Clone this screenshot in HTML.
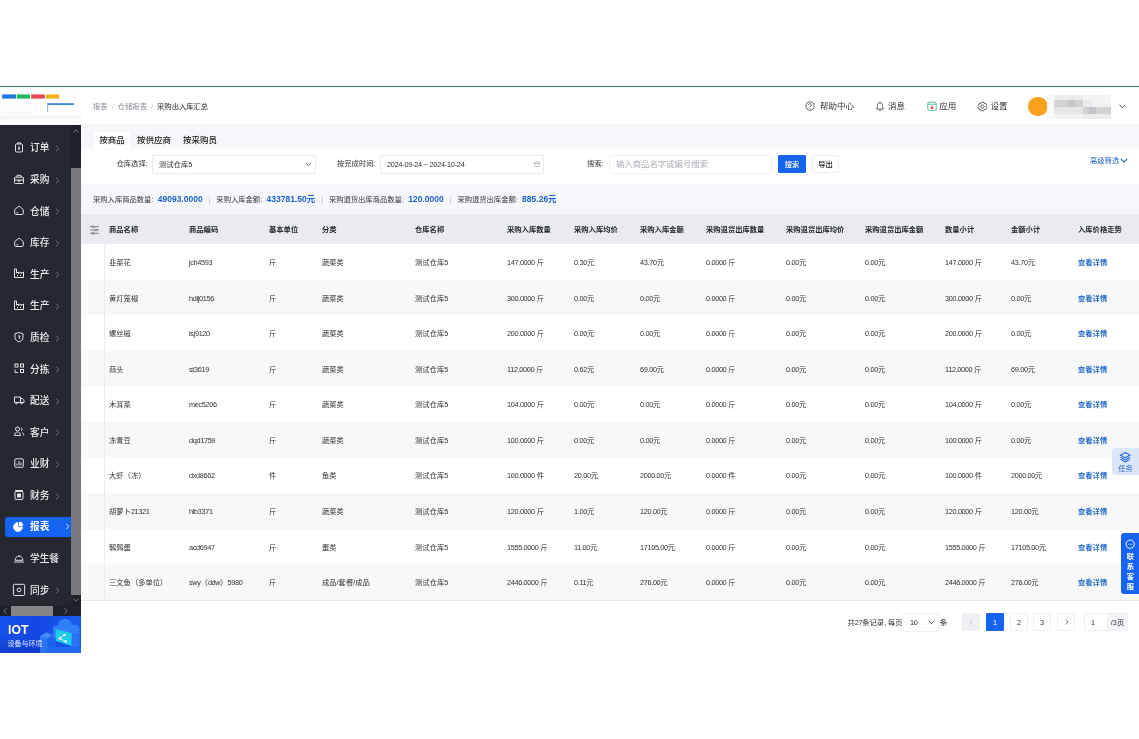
<!DOCTYPE html>
<html lang="zh-CN"><head><meta charset="utf-8"><title>采购出入库汇总</title>
<style>
*{box-sizing:border-box;margin:0;padding:0}
html,body{width:1139px;height:739px;overflow:hidden;background:#fff}
body{position:relative;filter:blur(.3px);font-family:"Liberation Sans","Noto Sans CJK SC",sans-serif;font-size:7.3px;color:#333;line-height:1}
.abs{position:absolute}
#topline{left:0;top:86px;width:1139px;height:1.2px;background:#3c8765;box-shadow:0 0 1.5px #9fd3bb}
#header{left:81px;top:87px;width:1058px;height:37px;background:#fff}
#logo{left:0;top:87px;width:81px;height:38px;background:#fefefe}
#gray{left:81px;top:124px;width:1058px;height:90px;background:#f6f7fa}
#side{left:0;top:125px;width:81px;height:491px;background:#252831}
#vsb{left:71px;top:125px;width:10px;height:480px;background:#1f2128}
#vthumb{left:71px;top:168px;width:10px;height:427px;background:#77787c}
#hsb{left:0;top:604.8px;width:81px;height:11px;background:#1f2128}
#hthumb{left:10.7px;top:605.7px;width:42.4px;height:10.1px;background:#858587}
#iot{left:0;top:615.8px;width:81px;height:37px;background:linear-gradient(90deg,#1650ea 0%,#1248e2 45%,#1a5cee 100%);overflow:hidden}
.mi{position:absolute;left:0;width:71px;height:20px;color:#eceded;font-size:9.7px;line-height:20px;font-weight:500}
.mi svg{position:absolute;left:12.6px;top:2.7px;width:12px;height:12px;overflow:visible;fill:none;stroke:#e2e3e6;stroke-width:1}
.mi .t{position:absolute;left:30px;top:0}
.mi .ar{position:absolute;left:55px;top:6.5px;width:5px;height:7px;stroke:#6b6e77;fill:none;stroke-width:1}
.mi.act{left:5px;width:66px;background:#1463f3;border-radius:3px 0 0 3px;color:#fff;font-weight:bold}
.mi.act svg{left:7px;top:4.2px}.mi.act .t{left:25px}.mi.act .ar{left:60px;stroke:#cfe0ff}
.bc{left:93px;top:102.5px;font-size:7.3px;color:#888c94;white-space:nowrap}
.bc b{font-weight:normal;color:#262626}
.bc s{text-decoration:none;color:#c3c6cc}
.hd{top:101.3px;font-size:8.5px;color:#333;white-space:nowrap;line-height:10px}
.hi{width:10px;height:10px;fill:none;stroke:#4a4a4a;stroke-width:.85}
.tab{top:132px;height:17px;line-height:17.4px;font-size:8.5px;color:#222;font-weight:500;white-space:nowrap;text-align:center}
#panel{left:81px;top:149px;width:1058px;height:35px;background:#fff;box-shadow:0 -1px 0 #fafbfc}
.lbl{top:160.4px;font-size:7.3px;color:#333;white-space:nowrap}
.inp{top:155px;height:19px;border:1px solid #e9ebef;border-radius:1.5px;background:#fff;font-size:7.3px;line-height:17.8px;color:#333;padding-left:6px;white-space:nowrap}
.stats{left:93px;top:195.4px;font-size:7.3px;color:#333;white-space:nowrap;line-height:9px}
.stats b{color:#1a62c9;font-size:8.5px;font-weight:bold;margin-left:2.3px}
.stats i{font-style:normal;color:#b5b8bf;margin:0 6px 0 5.8px}
#thead{left:81px;top:214px;width:1058px;height:30px;background:#e9ebf1}
#thead span{position:absolute;top:12px;font-weight:bold;color:#23262e;font-size:7.3px;white-space:nowrap}
.row{position:absolute;left:81px;width:1058px;height:35.56px;background:#fff}
.row.alt{background:#f7f8fa}
.row span{position:absolute;top:15px;white-space:nowrap;color:#333;font-size:7.3px}
.row span.lk{color:#2a6fc6;font-weight:bold}
i{font-style:normal;letter-spacing:-.33px}
.inp i{letter-spacing:-.24px}
.stats i{letter-spacing:0}
#vline{left:104px;top:214px;width:1px;height:386px;background:#ebedf1}
#tbot{left:81px;top:599.6px;width:1058px;height:1px;background:#e6e8ec}
.pg{top:613px;height:18px;width:18px;border:1px solid #eff0f3;background:#fff;text-align:center;line-height:18.6px;font-size:7.3px;color:#333;border-radius:1px}
</style></head><body>
<div class="abs" id="topline"></div>
<div class="abs" id="logo">
<svg class="abs" style="left:0;top:0;width:81px;height:38px" viewBox="0 0 81 38">
<rect x="0" y="28.3" width="81" height="4" fill="#f4f6fa"/>
<rect x="2.2" y="7.4" width="13.8" height="4.2" fill="#1f76e0"/>
<rect x="16.8" y="7.4" width="13.2" height="4.2" fill="#22b85a"/>
<rect x="31.2" y="7.4" width="13.6" height="4.2" fill="#e8494a"/>
<rect x="46" y="7.4" width="13.2" height="4.2" fill="#f3b21c"/>
<rect x="47" y="16.2" width="27" height="1.8" fill="#3f86d8"/>
<rect x="47" y="16.2" width="1.2" height="8.4" fill="#8db6e6"/>
<path d="M2.5 26h30.5l4-9.5" fill="none" stroke="#f1efee" stroke-width=".8"/>
<path d="M65.5 8v4M75.5 8v7l2 1" fill="none" stroke="#f3f1ee" stroke-width=".8"/>
</svg>
</div>
<div class="abs" id="header"></div>
<div class="abs bc">报表&nbsp; <s>/</s>&nbsp; 仓储报表&nbsp; <s>/</s>&nbsp; <b>采购出入库汇总</b></div>

<svg class="abs hi" style="left:805.3px;top:101px" viewBox="0 0 10 10"><circle cx="5" cy="5" r="4.1"/><path d="M3.7 4.1a1.3 1.3 0 112.1 1c-.5.4-.8.6-.8 1.1M5 7.2v.7"/></svg>
<div class="abs hd" style="left:820px">帮助中心</div>
<svg class="abs hi" style="left:875.3px;top:101px" viewBox="0 0 10 10"><path d="M1.4 8c1-.9 1-1.8 1-3.7a2.6 2.6 0 015.2 0c0 1.9 0 2.8 1 3.7zM3.9 9.6h2.2M5 .6v1.1"/></svg>
<div class="abs hd" style="left:888px">消息</div>
<svg class="abs hi" style="left:926.5px;top:101.2px;stroke:#3bb08a" viewBox="0 0 10 10"><rect x=".8" y="1.2" width="8.4" height="8.2" rx="1.5"/><path d="M.8 3.2h8.4" /><path d="M5 4.4v3.2M3.7 6.3L5 7.7l1.3-1.4" stroke="#e0463f" stroke-width="1.1"/></svg>
<div class="abs hd" style="left:939.3px">应用</div>
<svg class="abs hi" style="left:976.6px;top:100.6px;width:11px;height:11px;stroke-width:.8" viewBox="0 0 10 10"><path d="M3.9.9h2.2l.5 1.2 1.3-.2 1.1 1.9-.8 1 .8 1-1.1 1.9-1.3-.2-.5 1.2H3.9l-.5-1.2-1.3.2L1 5.8l.8-1-.8-1 1.1-1.9 1.3.2z" transform="translate(0 .2)"/><circle cx="5" cy="5" r="1.5"/></svg>
<div class="abs hd" style="left:990.6px">设置</div>
<div class="abs" style="left:1028px;top:96.8px;width:19.6px;height:19.6px;border-radius:10px;background:#f7a11c"></div>
<div class="abs" style="left:1046.8px;top:95px;width:64px;height:24.4px;background:#f3f3f5"></div>
<div class="abs" style="left:1046.8px;top:95px;width:7px;height:24.4px;background:#f8f8fa"></div>
<div class="abs" style="left:1054px;top:95px;width:28.5px;height:4.6px;background:#ededef"></div>
<div class="abs" style="left:1054px;top:99.6px;width:28.5px;height:7.4px;background:#d3d3d6"></div>
<div class="abs" style="left:1068px;top:99.6px;width:7px;height:7.4px;background:#c6c6ca"></div>
<div class="abs" style="left:1054px;top:107px;width:28.5px;height:6.7px;background:#e6e6e9"></div>
<div class="abs" style="left:1082.5px;top:99.6px;width:10px;height:7.4px;background:#ebebee"></div>
<div class="abs" style="left:1082.5px;top:107px;width:28.3px;height:6.7px;background:#d2d2d5"></div>
<div class="abs" style="left:1089px;top:107px;width:7px;height:6.7px;background:#c4c4c8"></div>
<div class="abs" style="left:1082.5px;top:113.7px;width:28.3px;height:5.7px;background:#ececef"></div>
<svg class="abs" style="left:1118.5px;top:104.2px;width:7px;height:5px" viewBox="0 0 7 5"><path d="M.6.8L3.5 3.7 6.4.8" fill="none" stroke="#555" stroke-width="1"/></svg>

<div class="abs" id="gray"></div>
<div class="abs tab" style="left:94px;width:36px;background:#fff;border-radius:2px 2px 0 0">按商品</div>
<div class="abs tab" style="left:132px;width:44px">按供应商</div>
<div class="abs tab" style="left:178px;width:44px">按采购员</div>
<div class="abs" id="panel"></div>
<div class="abs lbl" style="left:116.5px">仓库选择:</div>
<div class="abs inp" style="left:152px;width:164px">测试仓库5<svg class="abs" style="right:3.5px;top:5.5px;width:7px;height:5px" viewBox="0 0 7 5"><path d="M.8.8L3.5 3.8 6.2.8" fill="none" stroke="#666" stroke-width=".9"/></svg></div>
<div class="abs lbl" style="left:337px">按完成时间:</div>
<div class="abs inp" style="left:380px;width:164px"><i>2024-09-24 ~ 2024-10-24</i><svg class="abs" style="right:3px;top:5px;width:6px;height:6px" viewBox="0 0 6 6"><rect x=".5" y="1" width="5" height="4.5" rx=".8" fill="none" stroke="#aaa" stroke-width=".7"/><path d="M.5 2.5h5" stroke="#aaa" stroke-width=".7"/></svg></div>
<div class="abs lbl" style="left:587px">搜索:</div>
<div class="abs inp" style="left:609px;width:163px;border-color:#eef0f3;color:#a9acb3;font-size:8.4px">输入商品名字或编号搜索</div>
<div class="abs" style="left:778px;top:155px;width:28px;height:18px;background:#1463f3;border-radius:1.5px;color:#fff;font-size:7.3px;line-height:19px;font-weight:500;text-align:center">搜索</div>
<div class="abs" style="left:812px;top:155px;width:27px;height:18px;background:#fff;border:1px solid #eceef2;border-radius:1.5px;color:#222;font-size:7.3px;line-height:17.5px;font-weight:500;text-align:center">导出</div>
<div class="abs" style="left:1090px;top:156.5px;color:#2468c4;font-size:7.3px;white-space:nowrap">高级筛选<svg style="width:8px;height:5px;margin-left:1px" viewBox="0 0 8 5"><path d="M.8.8L4 4 7.2.8" fill="none" stroke="#2468c4" stroke-width="1.1"/></svg></div>
<div class="abs stats">采购入库商品数量: <b>49093.0000</b><i>|</i>采购入库金额: <b>433781.50元</b><i>|</i>采购退货出库商品数量: <b>120.0000</b><i>|</i>采购退货出库金额: <b>885.26元</b></div>
<div class="abs" id="thead">
<svg class="abs" style="left:9px;top:10.5px;width:9px;height:10px" viewBox="0 0 9 10"><path d="M0 1.7h9M0 5h9M0 8.3h9" stroke="#4a4d55" stroke-width=".65" fill="none"/><circle cx="3.2" cy="1.7" r="1" fill="#e9ebf1" stroke="#4a4d55" stroke-width=".6"/><circle cx="6" cy="5" r="1" fill="#e9ebf1" stroke="#4a4d55" stroke-width=".6"/><circle cx="3.2" cy="8.3" r="1" fill="#e9ebf1" stroke="#4a4d55" stroke-width=".6"/></svg>
<span style="left:28px">商品名称</span>
<span style="left:108px">商品编码</span>
<span style="left:188px">基本单位</span>
<span style="left:241px">分类</span>
<span style="left:334px">仓库名称</span>
<span style="left:426px">采购入库数量</span>
<span style="left:493px">采购入库均价</span>
<span style="left:559px">采购入库金额</span>
<span style="left:625px">采购退货出库数量</span>
<span style="left:705px">采购退货出库均价</span>
<span style="left:784px">采购退货出库金额</span>
<span style="left:864px">数量小计</span>
<span style="left:930px">金额小计</span>
<span style="left:997px">入库价格走势</span>
</div>
<div class="row" style="top:244.05px">
<span style="left:28px">韭菜花</span>
<span style="left:108px"><i>jch4593</i></span>
<span style="left:188px">斤</span>
<span style="left:241px">蔬菜类</span>
<span style="left:334px">测试仓库<i>5</i></span>
<span style="left:426px"><i>147.0000</i> 斤</span>
<span style="left:493px"><i>0.30</i>元</span>
<span style="left:559px"><i>43.70</i>元</span>
<span style="left:625px"><i>0.0000</i> 斤</span>
<span style="left:705px"><i>0.00</i>元</span>
<span style="left:784px"><i>0.00</i>元</span>
<span style="left:864px"><i>147.0000</i> 斤</span>
<span style="left:930px"><i>43.70</i>元</span>
<span class="lk" style="left:997px">查看详情</span>
</div>
<div class="row alt" style="top:279.61px">
<span style="left:28px">黄灯笼椒</span>
<span style="left:108px"><i>hdlj0156</i></span>
<span style="left:188px">斤</span>
<span style="left:241px">蔬菜类</span>
<span style="left:334px">测试仓库<i>5</i></span>
<span style="left:426px"><i>300.0000</i> 斤</span>
<span style="left:493px"><i>0.00</i>元</span>
<span style="left:559px"><i>0.00</i>元</span>
<span style="left:625px"><i>0.0000</i> 斤</span>
<span style="left:705px"><i>0.00</i>元</span>
<span style="left:784px"><i>0.00</i>元</span>
<span style="left:864px"><i>300.0000</i> 斤</span>
<span style="left:930px"><i>0.00</i>元</span>
<span class="lk" style="left:997px">查看详情</span>
</div>
<div class="row" style="top:315.17px">
<span style="left:28px">螺丝椒</span>
<span style="left:108px"><i>lsj9120</i></span>
<span style="left:188px">斤</span>
<span style="left:241px">蔬菜类</span>
<span style="left:334px">测试仓库<i>5</i></span>
<span style="left:426px"><i>200.0000</i> 斤</span>
<span style="left:493px"><i>0.00</i>元</span>
<span style="left:559px"><i>0.00</i>元</span>
<span style="left:625px"><i>0.0000</i> 斤</span>
<span style="left:705px"><i>0.00</i>元</span>
<span style="left:784px"><i>0.00</i>元</span>
<span style="left:864px"><i>200.0000</i> 斤</span>
<span style="left:930px"><i>0.00</i>元</span>
<span class="lk" style="left:997px">查看详情</span>
</div>
<div class="row alt" style="top:350.73px">
<span style="left:28px">蒜头</span>
<span style="left:108px"><i>st3619</i></span>
<span style="left:188px">斤</span>
<span style="left:241px">蔬菜类</span>
<span style="left:334px">测试仓库<i>5</i></span>
<span style="left:426px"><i>112.0000</i> 斤</span>
<span style="left:493px"><i>0.62</i>元</span>
<span style="left:559px"><i>69.00</i>元</span>
<span style="left:625px"><i>0.0000</i> 斤</span>
<span style="left:705px"><i>0.00</i>元</span>
<span style="left:784px"><i>0.00</i>元</span>
<span style="left:864px"><i>112.0000</i> 斤</span>
<span style="left:930px"><i>69.00</i>元</span>
<span class="lk" style="left:997px">查看详情</span>
</div>
<div class="row" style="top:386.29px">
<span style="left:28px">木耳菜</span>
<span style="left:108px"><i>mec5206</i></span>
<span style="left:188px">斤</span>
<span style="left:241px">蔬菜类</span>
<span style="left:334px">测试仓库<i>5</i></span>
<span style="left:426px"><i>104.0000</i> 斤</span>
<span style="left:493px"><i>0.00</i>元</span>
<span style="left:559px"><i>0.00</i>元</span>
<span style="left:625px"><i>0.0000</i> 斤</span>
<span style="left:705px"><i>0.00</i>元</span>
<span style="left:784px"><i>0.00</i>元</span>
<span style="left:864px"><i>104.0000</i> 斤</span>
<span style="left:930px"><i>0.00</i>元</span>
<span class="lk" style="left:997px">查看详情</span>
</div>
<div class="row alt" style="top:421.85px">
<span style="left:28px">冻青豆</span>
<span style="left:108px"><i>dqd1759</i></span>
<span style="left:188px">斤</span>
<span style="left:241px">蔬菜类</span>
<span style="left:334px">测试仓库<i>5</i></span>
<span style="left:426px"><i>100.0000</i> 斤</span>
<span style="left:493px"><i>0.00</i>元</span>
<span style="left:559px"><i>0.00</i>元</span>
<span style="left:625px"><i>0.0000</i> 斤</span>
<span style="left:705px"><i>0.00</i>元</span>
<span style="left:784px"><i>0.00</i>元</span>
<span style="left:864px"><i>100.0000</i> 斤</span>
<span style="left:930px"><i>0.00</i>元</span>
<span class="lk" style="left:997px">查看详情</span>
</div>
<div class="row" style="top:457.41px">
<span style="left:28px">大虾（冻）</span>
<span style="left:108px"><i>dxd8662</i></span>
<span style="left:188px">件</span>
<span style="left:241px">鱼类</span>
<span style="left:334px">测试仓库<i>5</i></span>
<span style="left:426px"><i>100.0000</i> 件</span>
<span style="left:493px"><i>20.00</i>元</span>
<span style="left:559px"><i>2000.00</i>元</span>
<span style="left:625px"><i>0.0000</i> 件</span>
<span style="left:705px"><i>0.00</i>元</span>
<span style="left:784px"><i>0.00</i>元</span>
<span style="left:864px"><i>100.0000</i> 件</span>
<span style="left:930px"><i>2000.00</i>元</span>
<span class="lk" style="left:997px">查看详情</span>
</div>
<div class="row alt" style="top:492.97px">
<span style="left:28px">胡萝卜<i>21321</i></span>
<span style="left:108px"><i>hlb3371</i></span>
<span style="left:188px">斤</span>
<span style="left:241px">蔬菜类</span>
<span style="left:334px">测试仓库<i>5</i></span>
<span style="left:426px"><i>120.0000</i> 斤</span>
<span style="left:493px"><i>1.00</i>元</span>
<span style="left:559px"><i>120.00</i>元</span>
<span style="left:625px"><i>0.0000</i> 斤</span>
<span style="left:705px"><i>0.00</i>元</span>
<span style="left:784px"><i>0.00</i>元</span>
<span style="left:864px"><i>120.0000</i> 斤</span>
<span style="left:930px"><i>120.00</i>元</span>
<span class="lk" style="left:997px">查看详情</span>
</div>
<div class="row" style="top:528.53px">
<span style="left:28px">鹌鹑蛋</span>
<span style="left:108px"><i>acd6947</i></span>
<span style="left:188px">斤</span>
<span style="left:241px">蛋类</span>
<span style="left:334px">测试仓库<i>5</i></span>
<span style="left:426px"><i>1555.0000</i> 斤</span>
<span style="left:493px"><i>11.00</i>元</span>
<span style="left:559px"><i>17105.00</i>元</span>
<span style="left:625px"><i>0.0000</i> 斤</span>
<span style="left:705px"><i>0.00</i>元</span>
<span style="left:784px"><i>0.00</i>元</span>
<span style="left:864px"><i>1555.0000</i> 斤</span>
<span style="left:930px"><i>17105.00</i>元</span>
<span class="lk" style="left:997px">查看详情</span>
</div>
<div class="row alt" style="top:564.09px">
<span style="left:28px">三文鱼（多单位）</span>
<span style="left:108px"><i>swy</i>（<i>ddw</i>）<i>5980</i></span>
<span style="left:188px">斤</span>
<span style="left:241px">成品/套餐/成品</span>
<span style="left:334px">测试仓库<i>5</i></span>
<span style="left:426px"><i>2446.0000</i> 斤</span>
<span style="left:493px"><i>0.11</i>元</span>
<span style="left:559px"><i>276.00</i>元</span>
<span style="left:625px"><i>0.0000</i> 斤</span>
<span style="left:705px"><i>0.00</i>元</span>
<span style="left:784px"><i>0.00</i>元</span>
<span style="left:864px"><i>2446.0000</i> 斤</span>
<span style="left:930px"><i>276.00</i>元</span>
<span class="lk" style="left:997px">查看详情</span>
</div>
<div class="abs" id="vline"></div><div class="abs" id="tbot"></div>
<div class="abs" style="left:847.5px;top:619px;font-size:7.3px;color:#333;white-space:nowrap">共<i>27</i>条记录<i>,</i> 每页</div>
<div class="abs pg" style="left:903px;width:36px;height:19px;text-align:left;padding-left:6px"><i>10</i><svg class="abs" style="right:3.5px;top:5.5px;width:7px;height:5px" viewBox="0 0 7 5"><path d="M.8.8L3.5 3.8 6.2.8" fill="none" stroke="#555" stroke-width=".9"/></svg></div>
<div class="abs" style="left:940px;top:619px;font-size:7.3px;color:#333">条</div>
<div class="abs pg" style="left:962px;background:#eff0f3;border-color:#eff0f3"><svg class="abs" style="left:6px;top:5px;width:4px;height:6px" viewBox="0 0 4 6"><path d="M3.2.6L.9 3l2.3 2.4" fill="none" stroke="#b3b6bd" stroke-width=".8"/></svg></div>
<div class="abs pg" style="left:986px;background:#1463f3;border-color:#1463f3;color:#fff">1</div>
<div class="abs pg" style="left:1010px">2</div>
<div class="abs pg" style="left:1033px">3</div>
<div class="abs pg" style="left:1057px"><svg class="abs" style="left:6.5px;top:5px;width:4px;height:6px" viewBox="0 0 4 6"><path d="M.8.6L3.1 3 .8 5.4" fill="none" stroke="#555" stroke-width=".8"/></svg></div>
<div class="abs pg" style="left:1084px;width:25px;padding-right:7px">1</div>
<div class="abs pg" style="left:1107px;width:21px;background:#f4f5f8;border-color:#f0f1f4">/3页</div>
<div class="abs" style="left:1111.5px;top:448px;width:28px;height:27px;background:#dce6f9;border-radius:4px 0 0 4px"></div>
<svg class="abs" style="left:1118.8px;top:450.5px;width:12.5px;height:12.5px" viewBox="0 0 12 12"><path d="M6 1.5L10.5 4 6 6.5 1.5 4zM1.5 6L6 8.5 10.5 6M1.5 8L6 10.5 10.5 8" fill="none" stroke="#1a62d6" stroke-width="1"/></svg>
<div class="abs" style="left:1115.5px;top:465px;width:20px;text-align:center;font-size:7.3px;color:#2468d2">任务</div>
<div class="abs" style="left:1121px;top:533px;width:18px;height:61px;background:#1463f3;border-radius:3px 0 0 3px"></div>
<svg class="abs" style="left:1125px;top:539px;width:10.4px;height:10.4px" viewBox="0 0 10 10"><circle cx="5" cy="5" r="4" fill="none" stroke="#fff" stroke-width=".9"/><path d="M3.2 5h.01M5 5h.01M6.8 5h.01" stroke="#fff" stroke-width="1" stroke-linecap="round"/></svg>
<div class="abs" style="left:1125.3px;top:551.9px;width:10px;font-size:7.3px;line-height:10.1px;color:#fff;font-weight:bold;text-align:center">联<br>系<br>客<br>服</div>
<div class="abs" id="side"></div><div class="abs" id="vsb"></div><div class="abs" id="vthumb"></div>
<svg class="abs" style="left:73px;top:129px;width:6px;height:4px" viewBox="0 0 6 4"><path d="M.5 3.5L3 .8 5.5 3.5" fill="none" stroke="#777a80" stroke-width="1"/></svg>
<svg class="abs" style="left:73px;top:598px;width:6px;height:4px" viewBox="0 0 6 4"><path d="M.5.5L3 3.2 5.5.5" fill="none" stroke="#777a80" stroke-width="1"/></svg>
<div class="abs" id="hsb"></div><div class="abs" id="hthumb"></div>
<svg class="abs" style="left:3px;top:607.5px;width:4px;height:6px" viewBox="0 0 4 6"><path d="M3.5.5L.8 3 3.5 5.5" fill="none" stroke="#777a80" stroke-width="1"/></svg>
<svg class="abs" style="left:64px;top:607.5px;width:4px;height:6px" viewBox="0 0 4 6"><path d="M.5.5L3.2 3 .5 5.5" fill="none" stroke="#777a80" stroke-width="1"/></svg>
<div class="mi" style="top:138.4px"><svg viewBox="0 0 12 12"><rect x="2.5" y="3" width="7" height="8" rx="1"/><path d="M4.5 3V1.8h3V3M6 5.2v3.2M5 7l1 1.4L7 7"/></svg><span class="t">订单</span><svg class="ar" viewBox="0 0 5 7" style="width:5px;height:7px;left:55px;top:6.5px;stroke-width:1"><path d="M1 .8L4 3.5 1 6.2" /></svg></div>
<div class="mi" style="top:170.0px"><svg viewBox="0 0 12 12"><rect x="1.5" y="4.2" width="9" height="6.3" rx=".8"/><path d="M4 4.2V2.3h4v1.9M1.5 7h9M5 7v1.2h2V7"/></svg><span class="t">采购</span><svg class="ar" viewBox="0 0 5 7" style="width:5px;height:7px;left:55px;top:6.5px;stroke-width:1"><path d="M1 .8L4 3.5 1 6.2" /></svg></div>
<div class="mi" style="top:201.6px"><svg viewBox="0 0 12 12"><path d="M1.7 5.6L6 2l4.3 3.6v3.9a1 1 0 01-1 1H2.7a1 1 0 01-1-1zM3.5 8.8h1.5M3.5 7.3h.1"/></svg><span class="t">仓储</span><svg class="ar" viewBox="0 0 5 7" style="width:5px;height:7px;left:55px;top:6.5px;stroke-width:1"><path d="M1 .8L4 3.5 1 6.2" /></svg></div>
<div class="mi" style="top:233.2px"><svg viewBox="0 0 12 12"><path d="M1.7 5.6L6 2l4.3 3.6v3.9a1 1 0 01-1 1H2.7a1 1 0 01-1-1zM3.5 8.8h1.5M3.5 7.3h.1"/></svg><span class="t">库存</span><svg class="ar" viewBox="0 0 5 7" style="width:5px;height:7px;left:55px;top:6.5px;stroke-width:1"><path d="M1 .8L4 3.5 1 6.2" /></svg></div>
<div class="mi" style="top:264.8px"><svg viewBox="0 0 12 12"><path d="M1.5 2v8.5h9V5L8 6.5V5L5.5 6.5V5L3.5 6V2zM4 8.5h1M7 8.5h1"/></svg><span class="t">生产</span><svg class="ar" viewBox="0 0 5 7" style="width:5px;height:7px;left:55px;top:6.5px;stroke-width:1"><path d="M1 .8L4 3.5 1 6.2" /></svg></div>
<div class="mi" style="top:296.4px"><svg viewBox="0 0 12 12"><path d="M1.5 2v8.5h9V5L8 6.5V5L5.5 6.5V5L3.5 6V2zM4 8.5h1M7 8.5h1"/></svg><span class="t">生产</span><svg class="ar" viewBox="0 0 5 7" style="width:5px;height:7px;left:55px;top:6.5px;stroke-width:1"><path d="M1 .8L4 3.5 1 6.2" /></svg></div>
<div class="mi" style="top:328.0px"><svg viewBox="0 0 12 12"><path d="M6 1.5l4 1.3v3.7c0 2.3-2 3.7-4 4.3-2-.6-4-2-4-4.3V2.8zM5 5h2l-1 3"/></svg><span class="t">质检</span><svg class="ar" viewBox="0 0 5 7" style="width:5px;height:7px;left:55px;top:6.5px;stroke-width:1"><path d="M1 .8L4 3.5 1 6.2" /></svg></div>
<div class="mi" style="top:359.6px"><svg viewBox="0 0 12 12"><rect x="2" y="2" width="3" height="3"/><rect x="7.5" y="2" width="3" height="3"/><rect x="7.5" y="7.5" width="3" height="3"/><path d="M2 7.5v3h3"/></svg><span class="t">分拣</span><svg class="ar" viewBox="0 0 5 7" style="width:5px;height:7px;left:55px;top:6.5px;stroke-width:1"><path d="M1 .8L4 3.5 1 6.2" /></svg></div>
<div class="mi" style="top:391.2px"><svg viewBox="0 0 12 12"><path d="M1.5 3h6v5.5h-6zM7.5 4.5h2l1.5 2v2h-3.5M3.5 10a.8.8 0 100-1.6.8.8 0 000 1.6zM8.5 10a.8.8 0 100-1.6.8.8 0 000 1.6z"/></svg><span class="t">配送</span><svg class="ar" viewBox="0 0 5 7" style="width:5px;height:7px;left:55px;top:6.5px;stroke-width:1"><path d="M1 .8L4 3.5 1 6.2" /></svg></div>
<div class="mi" style="top:422.8px"><svg viewBox="0 0 12 12"><circle cx="4.5" cy="4" r="2"/><path d="M1.5 10.5c0-2 1.3-3.5 3-3.5s3 1.5 3 3.5zM8 2.5a2 2 0 010 3.5M9 7.5c1 .5 1.8 1.5 1.8 3"/></svg><span class="t">客户</span><svg class="ar" viewBox="0 0 5 7" style="width:5px;height:7px;left:55px;top:6.5px;stroke-width:1"><path d="M1 .8L4 3.5 1 6.2" /></svg></div>
<div class="mi" style="top:454.4px"><svg viewBox="0 0 12 12"><rect x="1.8" y="1.8" width="8.5" height="8.5" rx="1"/><path d="M4 8.5V6.5M6 8.5V4M8 8.5V5.5"/></svg><span class="t">业财</span><svg class="ar" viewBox="0 0 5 7" style="width:5px;height:7px;left:55px;top:6.5px;stroke-width:1"><path d="M1 .8L4 3.5 1 6.2" /></svg></div>
<div class="mi" style="top:486.0px"><svg viewBox="0 0 12 12"><rect x="2" y="2.5" width="8" height="8" rx=".8"/><path d="M2 1.5h8"/><rect x="4.5" y="5" width="3" height="3" fill="#e8e9ec"/></svg><span class="t">财务</span><svg class="ar" viewBox="0 0 5 7" style="width:5px;height:7px;left:55px;top:6.5px;stroke-width:1"><path d="M1 .8L4 3.5 1 6.2" /></svg></div>
<div class="mi act" style="top:516.7px"><svg viewBox="0 0 12 12"><path d="M6 1.5A4.5 4.5 0 1010.5 6H6z" fill="#fff"/><path d="M7 .8V5h4.2A4.3 4.3 0 007 .8z" fill="#fff" stroke="none"/></svg><span class="t">报表</span><svg class="ar" viewBox="0 0 5 7" style="width:5px;height:7px;left:60px;top:6.5px;stroke-width:1"><path d="M1 .8L4 3.5 1 6.2" /></svg></div>
<div class="mi" style="top:549.2px"><svg viewBox="0 0 12 12"><path d="M1 10h10M2.2 8.3c0-2.4 1.6-4.2 3.8-4.2s3.8 1.8 3.8 4.2zM6 4V3"/></svg><span class="t">学生餐</span></div>
<div class="mi" style="top:580.8px"><svg viewBox="0 0 12 12"><g transform="translate(0 .9)"><rect x=".4" y=".4" width="11.2" height="11.2" rx="1"/><circle cx="6" cy="6" r="1.9"/></g></svg><span class="t">同步</span><svg class="ar" viewBox="0 0 5 7" style="width:5px;height:7px;left:55px;top:6.5px;stroke-width:1"><path d="M1 .8L4 3.5 1 6.2" /></svg></div>
<div class="abs" id="iot">
<svg class="abs" style="left:0;top:0;width:81px;height:37px" viewBox="0 0 81 37">
<defs><linearGradient id="ib" x1="0" y1="0" x2="0" y2="1"><stop offset=".55" stop-color="#0b2fb0" stop-opacity="0"/><stop offset="1" stop-color="#0b2fb0" stop-opacity=".55"/></linearGradient></defs>
<rect x="0" y="0" width="40" height="37" fill="url(#ib)"/>
<path d="M40 20.2l6.5-4 6.2 3.1V37H40z" fill="#2a74f4"/>
<path d="M40 20.2l6.5-4 6.2 3.1-5.3 3.5z" fill="#3f8af8"/>
<path d="M47.4 22.8l5.3-3.5 3 1.5V37h-8.3z" fill="#1d62ec"/>
<rect x="47" y="31" width="34" height="6" fill="#1f68f0"/>
<circle cx="65" cy="9.7" r="7" fill="#2f80f6"/><circle cx="56.5" cy="13.4" r="3.9" fill="#2f80f6"/><circle cx="74.6" cy="13.4" r="4.7" fill="#2f80f6"/>
<rect x="53" y="13" width="26.5" height="9" fill="#2f80f6"/>
<path d="M71.6 17h8v14h-8z" fill="#2873f3"/>
<path d="M55.8 13.2l15.8 3.9v12.8l-15.8-4.9z" fill="#1fcbe8"/>
<path d="M64.5 18.9l-4.8 3.5 6.1 3.1" fill="none" stroke="#e9fbff" stroke-width=".9"/>
<circle cx="64.5" cy="18.9" r="1.2" fill="#fff"/><circle cx="59.7" cy="22.4" r="1.2" fill="#fff"/><circle cx="65.8" cy="25.5" r="1.2" fill="#fff"/>
</svg>
<div class="abs" style="left:7.5px;top:7.2px;font-size:13.3px;line-height:13.3px;font-weight:bold;color:#fff;transform:scaleX(.92);transform-origin:0 0">IOT</div>
<div class="abs" style="left:7.5px;top:24.3px;font-size:7px;line-height:7px;color:#e3ecff;white-space:nowrap">设备与环境</div>
</div>
</body></html>
